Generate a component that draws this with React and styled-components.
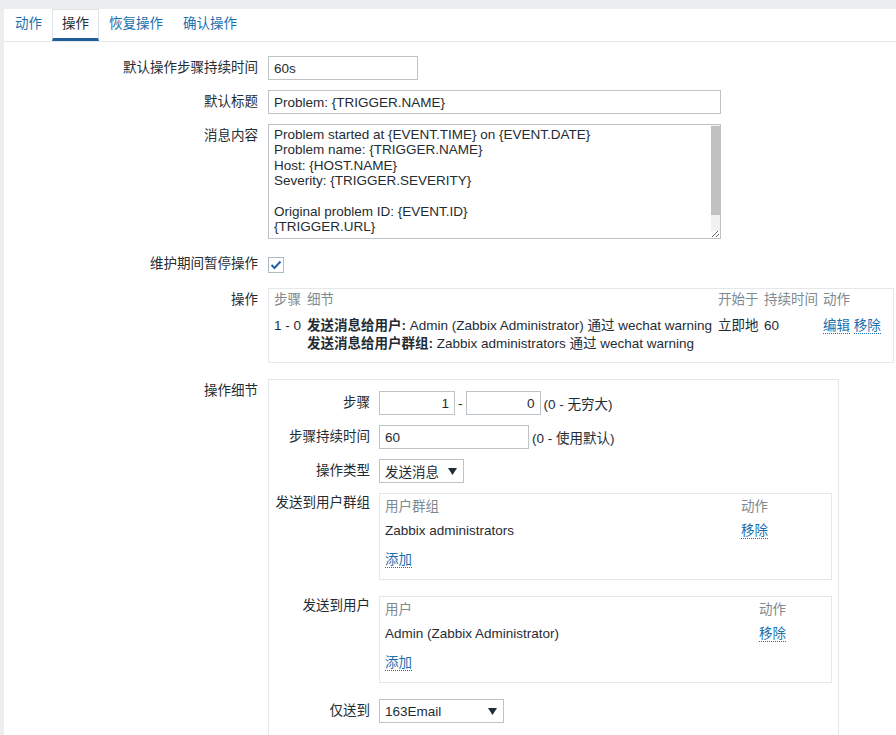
import styled, { createGlobalStyle } from "styled-components";

const GlobalStyle = createGlobalStyle`
  html, body {
    margin: 0;
    background: #ebeef0;
  }
  body {
    font-family: "Liberation Sans", Arial, "Noto Sans CJK SC", sans-serif;
    font-size: 13.5px;
    color: #1f2c33;
  }
`;

const Page = styled.div`
  padding: 9px 0 0 4px;
`;

const Panel = styled.div`
  background: #fff;
  min-height: 726px;
`;

const TabBar = styled.ul`
  display: flex;
  list-style: none;
  margin: 0;
  padding: 0 0 0 1px;
  border-bottom: 1px solid #e4e8ea;
`;

const Tab = styled.li`
  padding: 0 9px;
  line-height: 28px;
  cursor: pointer;
  border: 1px solid ${(p) => (p.$active ? "#dfe4e7" : "transparent")};
  border-bottom: 3px solid ${(p) => (p.$active ? "#1f5f9a" : "transparent")};
  color: ${(p) => (p.$active ? "#1f2c33" : "#1b6fae")};
`;

const Form = styled.div`
  display: grid;
  grid-template-columns: 254px 1fr;
  column-gap: 10px;
  row-gap: 10px;
  padding: 14px 0 0;
`;

const Label = styled.div`
  text-align: right;
  line-height: ${(p) => p.$lh || 24}px;
  white-space: nowrap;
`;

const Field = styled.div`
  display: flex;
  align-items: center;
  gap: ${(p) => p.$gap || 0}px;
  min-height: ${(p) => p.$h || 24}px;
`;

const Input = styled.input`
  box-sizing: border-box;
  width: ${(p) => p.$w}px;
  height: 24px;
  margin: 0;
  padding: 0 5px;
  border: 1px solid #bcc4c9;
  border-radius: 0;
  font: inherit;
  color: inherit;
  text-align: ${(p) => p.$align || "left"};
  background: #fff;
  outline: none;
`;

const TextWrap = styled.div`
  position: relative;
  display: flex;
`;

const TextArea = styled.textarea`
  box-sizing: border-box;
  width: 453px;
  height: 115px;
  margin: 0;
  padding: 2px 14px 2px 5px;
  border: 1px solid #bcc4c9;
  font: inherit;
  line-height: 15.4px;
  color: inherit;
  resize: both;
  outline: none;
  overflow: hidden;
`;

/* the textarea's own scrollbar, drawn over its right edge */
const ScrollTrack = styled.span`
  position: absolute;
  top: 1px;
  right: 1px;
  bottom: 8px;
  width: 9px;
  background: #f1f1f1;
  pointer-events: none;
`;

const ScrollThumb = styled.span`
  position: absolute;
  top: 1px;
  left: 0;
  right: 0;
  height: 89px;
  background: #c1c1c1;
`;

const CheckBox = styled.span`
  box-sizing: border-box;
  display: inline-flex;
  align-items: center;
  justify-content: center;
  width: 16px;
  height: 16px;
  margin-top: 2px;
  border: 1px solid #acbbc2;
  background: #fff;
`;

const Box = styled.div`
  box-sizing: border-box;
  border: 1px solid #e4e8ea;
`;

const OpsBox = styled(Box)`
  margin: 0 2px 6px 0;
  padding: 0 5px 9px;
`;

const OpsTable = styled.table`
  width: 100%;
  table-layout: fixed;
  border-collapse: collapse;
  line-height: 18px;

  th {
    font-weight: normal;
    color: #7e8a91;
    text-align: left;
    padding: 2px 0 4px;
    white-space: nowrap;
  }
  td {
    padding: 4px 0 0;
    vertical-align: top;
    white-space: nowrap;
  }
  b {
    font-weight: bold;
  }
`;

const DetailBox = styled(Box)`
  width: 571px;
  padding: 11px 6px 24px;
  display: grid;
  grid-template-columns: 95px 1fr;
  column-gap: 9px;
  row-gap: 10px;
`;

const Hint = styled.span`
  white-space: nowrap;
`;

const Select = styled.div`
  box-sizing: border-box;
  display: inline-flex;
  align-items: center;
  justify-content: space-between;
  width: ${(p) => p.$w}px;
  height: 24px;
  padding: 0 6px 0 5px;
  border: 1px solid #bcc4c9;
  background: #fff;
`;

const ListBox = styled(Box)`
  width: 100%;
  margin-bottom: 6px;
  padding: 4px 5px 10px;
  display: grid;
  grid-template-columns: ${(p) => p.$nameCol}px 1fr;
  line-height: 18px;
`;

const ListHead = styled.div`
  color: #7e8a91;
  padding-bottom: 3px;
`;

const ListCell = styled.div`
  padding: 3px 0;
`;

const AddRow = styled.div`
  grid-column: 1 / -1;
  padding-top: 8px;
`;

const Link = styled.a`
  color: #1b6fae;
  text-decoration: none;
  border-bottom: 1px dotted #1b6fae;
  cursor: pointer;
`;

const Arrow = () => (
  <svg width="9" height="7" viewBox="0 0 9 7">
    <path d="M0 0h9L4.5 7z" fill="#1f2c33" />
  </svg>
);

const message = `Problem started at {EVENT.TIME} on {EVENT.DATE}
Problem name: {TRIGGER.NAME}
Host: {HOST.NAME}
Severity: {TRIGGER.SEVERITY}

Original problem ID: {EVENT.ID}
{TRIGGER.URL}

`;

const tabs = ["动作", "操作", "恢复操作", "确认操作"];

export default function App() {
  return (
    <Page>
      <GlobalStyle />
      <Panel>
        <TabBar>
          {tabs.map((t) => (
            <Tab key={t} $active={t === "操作"}>
              {t}
            </Tab>
          ))}
        </TabBar>

        <Form>
          <Label>默认操作步骤持续时间</Label>
          <Field>
            <Input $w={150} defaultValue="60s" />
          </Field>

          <Label>默认标题</Label>
          <Field>
            <Input $w={453} defaultValue="Problem: {TRIGGER.NAME}" />
          </Field>

          <Label>消息内容</Label>
          <Field>
            <TextWrap>
              <TextArea defaultValue={message} />
              <ScrollTrack>
                <ScrollThumb />
              </ScrollTrack>
            </TextWrap>
          </Field>

          <Label $lh={29}>维护期间暂停操作</Label>
          <Field $h={29}>
            <CheckBox>
              <svg width="12" height="10" viewBox="0 0 12 10">
                <path d="M1.5 5l3 3 6-6.5" fill="none" stroke="#1f65a6" strokeWidth="2" />
              </svg>
            </CheckBox>
          </Field>

          <Label>操作</Label>
          <OpsBox>
            <OpsTable>
              <colgroup>
                <col style={{ width: 33 }} />
                <col style={{ width: 411 }} />
                <col style={{ width: 46 }} />
                <col style={{ width: 59 }} />
                <col />
              </colgroup>
              <thead>
                <tr>
                  <th>步骤</th>
                  <th>细节</th>
                  <th>开始于</th>
                  <th>持续时间</th>
                  <th>动作</th>
                </tr>
              </thead>
              <tbody>
                <tr>
                  <td>1 - 0</td>
                  <td>
                    <b>发送消息给用户:</b> Admin (Zabbix Administrator) 通过 wechat warning
                    <br />
                    <b>发送消息给用户群组:</b> Zabbix administrators 通过 wechat warning
                  </td>
                  <td>立即地</td>
                  <td>60</td>
                  <td>
                    <Link>编辑</Link> <Link>移除</Link>
                  </td>
                </tr>
              </tbody>
            </OpsTable>
          </OpsBox>

          <Label>操作细节</Label>
          <DetailBox>
            <Label>步骤</Label>
            <Field $gap={3}>
              <Input $w={76} $align="right" defaultValue="1" />
              <span>-</span>
              <Input $w={75} $align="right" defaultValue="0" />
              <Hint>(0 - 无穷大)</Hint>
            </Field>

            <Label>步骤持续时间</Label>
            <Field $gap={3}>
              <Input $w={150} defaultValue="60" />
              <Hint>(0 - 使用默认)</Hint>
            </Field>

            <Label>操作类型</Label>
            <Field>
              <Select $w={85}>
                <span>发送消息</span>
                <Arrow />
              </Select>
            </Field>

            <Label $lh={20}>发送到用户群组</Label>
            <ListBox $nameCol={356}>
              <ListHead>用户群组</ListHead>
              <ListHead>动作</ListHead>
              <ListCell>Zabbix administrators</ListCell>
              <ListCell>
                <Link>移除</Link>
              </ListCell>
              <AddRow>
                <Link>添加</Link>
              </AddRow>
            </ListBox>

            <Label $lh={20}>发送到用户</Label>
            <ListBox $nameCol={374}>
              <ListHead>用户</ListHead>
              <ListHead>动作</ListHead>
              <ListCell>Admin (Zabbix Administrator)</ListCell>
              <ListCell>
                <Link>移除</Link>
              </ListCell>
              <AddRow>
                <Link>添加</Link>
              </AddRow>
            </ListBox>

            <Label>仅送到</Label>
            <Field>
              <Select $w={125}>
                <span>163Email</span>
                <Arrow />
              </Select>
            </Field>
          </DetailBox>
        </Form>
      </Panel>
    </Page>
  );
}
